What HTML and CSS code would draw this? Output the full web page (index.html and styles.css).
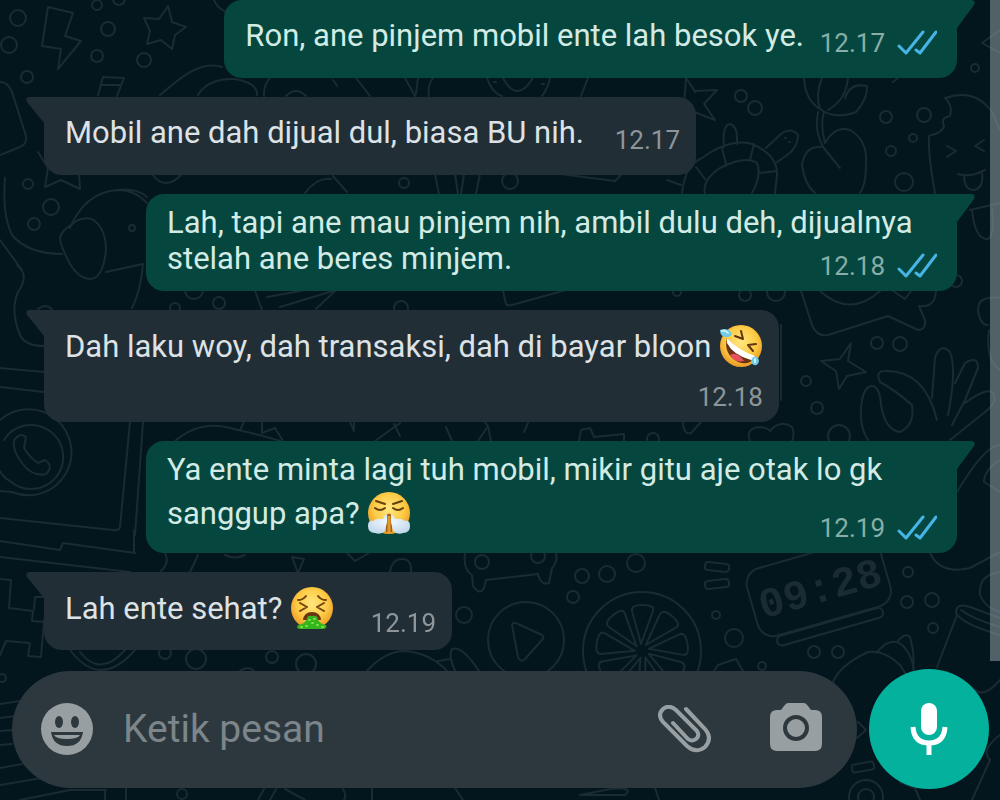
FILE: index.html
```html
<!DOCTYPE html>
<html lang="id">
<head>
    <meta charset="UTF-8">
    <meta name="viewport" content="width=device-width, initial-scale=1.0">
    <title>Chat</title>
    <link rel="stylesheet" href="styles.css">
</head>
<body>
    <!-- wallpaper -->
    <svg class="wallpaper" viewBox="0 0 1000 800" preserveAspectRatio="xMidYMid slice" aria-hidden="true">
        <!-- bubbles -->
        <g>
            <circle cx="18" cy="18" r="8"/><circle cx="9" cy="45" r="8"/><circle cx="97" cy="5" r="5"/>
            <circle cx="108" cy="29" r="7"/><circle cx="97" cy="56" r="6"/><circle cx="144" cy="60" r="7"/>
            <circle cx="27" cy="77" r="6"/><circle cx="119" cy="-1" r="6"/><circle cx="28" cy="184" r="5"/>
            <circle cx="51" cy="207" r="8"/><circle cx="34" cy="224" r="6"/><circle cx="132" cy="228" r="3"/>
            <circle cx="194" cy="290" r="9"/><circle cx="219" cy="303" r="6"/><circle cx="175" cy="308" r="5"/>
            <circle cx="165" cy="653" r="6"/><circle cx="196" cy="659" r="10"/><circle cx="272" cy="657" r="6"/>
            <circle cx="306" cy="664" r="10"/><circle cx="2" cy="678" r="4"/><circle cx="182" cy="794" r="5"/>
            <circle cx="482" cy="562" r="7"/><circle cx="538" cy="556" r="7"/><circle cx="464" cy="615" r="8"/>
            <circle cx="582" cy="576" r="7"/><circle cx="607" cy="574" r="8"/><circle cx="636" cy="563" r="9"/>
            <circle cx="573" cy="597" r="6"/><circle cx="716" cy="615" r="4"/><circle cx="734" cy="638" r="9"/>
            <circle cx="814" cy="652" r="6"/><circle cx="838" cy="652" r="6"/><circle cx="762" cy="666" r="4"/>
            <circle cx="908" cy="572" r="5"/><circle cx="907" cy="602" r="6"/><circle cx="932" cy="600" r="7"/>
            <circle cx="933" cy="628" r="5"/><circle cx="741" cy="96" r="6"/><circle cx="755" cy="108" r="7"/>
            <circle cx="886" cy="117" r="6"/><circle cx="924" cy="115" r="7"/><circle cx="913" cy="138" r="4"/>
            <circle cx="891" cy="151" r="5"/><circle cx="904" cy="182" r="9"/><circle cx="975" cy="68" r="4"/>
            <circle cx="404" cy="183" r="5"/><circle cx="510" cy="181" r="8"/><circle cx="745" cy="295" r="6"/>
            <circle cx="776" cy="292" r="9"/><circle cx="877" cy="343" r="6"/><circle cx="900" cy="344" r="7"/>
            <circle cx="806" cy="381" r="5"/><circle cx="817" cy="408" r="6"/><circle cx="839" cy="436" r="11"/>
            <circle cx="956" cy="281" r="6"/><circle cx="866" cy="797" r="8"/><circle cx="866" cy="797" r="17"/>
            <circle cx="401" cy="308" r="7"/><circle cx="653" cy="439" r="6"/><circle cx="677" cy="292" r="4"/>
        </g>
        <!-- bolt, stars, pages -->
        <path d="M48 7 73 13 65 36 81 41 58 69 61 49 42 46Z"/>
        <path d="M168 6 172 22 186 27 175 35 172 49 161 40 147 44 150 31 144 18 159 19Z"/>
        <path d="M98 95 103 77 124 78 117 96M101 85h20M160 95C180 78 200 60 222 67M198 95Q208 78 235 79Q258 83 257 95M264 96Q263 84 272 76M286 96q10-10 20 0M214 0q3 8 12 12"/>
        <path d="M0 82Q8 82 12 92L26 136Q27 144 20 147L0 155M38 152 48 168 45 187 61 180 80 189 79 173"/>
        <!-- elephant -->
        <path d="M5 178Q2 215 12 235Q28 254 62 254M0 240 22 270M70 228Q85 192 118 190Q135 190 147 203M110 191Q135 186 147 197"/>
        <path d="M70 226Q80 216 92 219Q106 228 106 250Q103 279 90 279Q78 278 70 264Q60 245 60 238Q62 230 70 226M106 272 143 264Q141 290 132 308M152 174Q165 192 182 174"/>
        <path d="M17 265Q30 275 18 292Q10 310 20 335Q25 346 44 346M255 291 262 310M267 297 333 285M280 307 336 290 316 309M38 309q7-6 14 0"/>
        <!-- laptop with chat sticker -->
        <path d="M0 368 44 372M0 387 44 392M130 422 120 527Q119 531 113 530L0 518M143 422 135 535"/>
        <path d="M0 420A43 43 0 1 1 12 492L0 491M0 471Q4 478 10 481A32 32 0 1 0 4 440"/>
        <path d="M14 440Q20 432 26 437L24 448Q30 458 38 463L45 460Q54 466 46 474Q32 477 22 463Q12 450 14 440Z"/>
        <path d="M175 441Q200 420 230 428Q265 436 280 441M240 430l4-8M262 422V433L275 428 283 441"/>
        <path d="M350 422l4 9V422M375 441l25-18M394 424l6 12M446 427l6 14M478 441l10-15 3 15M488 426l-4-5M524 432l4-9M579 441l2-11 9-2 4 9 30-3v7M502 287l4 17q1 2 6 1L566 290"/>
        <!-- castle -->
        <path d="M0 541 60 550 63 543 135 553M0 557 130 572M134 530v22M165 553q5 10-4 18M198 555l-8 17M292 557l12 2-6 14zM225 555q10 5 20 0"/>
        <path d="M0 579 11 580 9 608 33 611 32 621 44 622M0 655 6 641 30 643 28 656 41 657 44 620M44 597H35L34 609"/>
        <path d="M70 650Q100 690 135 650M80 652Q100 678 125 650M240 671q8-6 14 0"/>
        <path d="M0 704 20 701M0 718 16 716M0 731 13 730M0 745 12 744M0 768 22 764M0 785 60 775M20 800 70 790 106 790M105 800V790M126 789V800M258 800 264 789M270 800 276 789M285 789 305 800"/>
        <!-- bone, play, car -->
        <path d="M347 553l8 8 14-8M390 572Q392 559 402 559Q412 559 411 572"/>
        <path d="M465 553Q463 570 472 575L473 586Q480 596 484 588L486 580 538 574Q541 586 549 583L552 568Q558 562 556 553"/>
        <circle cx="526" cy="640" r="38"/>
        <path d="M512 625Q513 621 518 624L542 635Q545 637 542 640L525 659Q520 663 518 657Z"/>
        <path d="M367 671Q385 651 405 651Q430 653 447 671M438 661l13-2M479 671Q462 645 452 649Q448 655 455 671"/>
        <!-- citrus -->
        <circle cx="642" cy="651" r="59"/>
        <g id="slices">
            <path id="slice" d="M641 644 632 611Q631 605 642 605Q655 605 653 611Z"/>
            <use href="#slice" transform="rotate(40 642 651)"/><use href="#slice" transform="rotate(80 642 651)"/>
            <use href="#slice" transform="rotate(120 642 651)"/><use href="#slice" transform="rotate(160 642 651)"/>
            <use href="#slice" transform="rotate(200 642 651)"/><use href="#slice" transform="rotate(240 642 651)"/>
            <use href="#slice" transform="rotate(280 642 651)"/><use href="#slice" transform="rotate(320 642 651)"/>
        </g>
        <!-- alarm clock -->
        <g transform="rotate(-16 820 588)">
            <rect x="750" y="552" width="138" height="70" rx="16"/>
            <rect x="764" y="623" width="110" height="10" rx="5"/>
            <text class="clock" x="820" y="602" text-anchor="middle">09:28</text>
        </g>
        <rect x="705" y="563" width="24" height="8" rx="3" transform="rotate(6 717 567)"/>
        <rect x="705" y="580" width="24" height="8" rx="3" transform="rotate(-6 717 584)"/>
        <!-- muffin, cup -->
        <path d="M833 682Q840 665 868 652Q885 650 900 665L911 682M878 651Q893 634 905 648Q914 660 914 674M898 641Q905 632 910 637Q915 655 913 668M714 671l4-6 18-6 7 12"/>
        <path d="M1000 635Q962 624 956 613Q956 602 970 607L1000 618M1000 627Q975 620 961 610M957 615 937 667M930 553Q940 575 970 568L1000 552M1000 572Q978 575 980 595Q985 608 1000 612M975 690q10 8 25-10"/>
        <path d="M858 722l8 8-9 8M1000 735Q980 750 990 760L972 800M900 782l15 6 5 12M655 788l4 12M580 795h45q10-8-15-6zM455 788l8 12M343 789q4 6 1 11M372 789v11"/>
        <rect x="852" y="763" width="22" height="8" rx="2" transform="rotate(-10 863 767)"/>
        <!-- turtle -->
        <path d="M682 193Q685 165 702 158Q730 138 752 144Q778 155 777 175L775 193M705 193Q702 180 720 168Q745 155 757 163Q762 175 752 193M696 167l9 12M722 148l4 16M754 144l-4 16M760 173l17-2"/>
        <path d="M724 147Q722 125 730 124Q738 126 737 144M766 148 782 133Q792 127 798 135Q798 148 786 156L777 162M785 138h1M789 142h1M667 180l14 5"/>
        <path d="M684 105 686 78 695 91 717 90 704 104 715 120 694 112M690 84l5 8"/>
        <!-- flower -->
        <path d="M804 78Q805 100 820 109Q835 120 856 112Q868 98 867 86Q850 82 845 98M822 78Q815 95 820 109M848 78Q846 100 828 110M818 112Q814 130 823 147L840 168M824 112Q820 125 825 143"/>
        <path d="M823 147Q805 145 802 165Q805 185 815 193M825 143Q835 125 850 130Q868 140 866 165Q866 185 860 193"/>
        <!-- ice cream -->
        <path d="M945 98Q953 105 950 116Q940 118 944 125Q944 132 929 136Q928 155 935 193M945 98Q975 88 992 112L1000 130M947 146l9 5-9 6M984 140l-9 6 9 5M958 174Q970 178 985 170M964 175Q964 190 974 190Q984 188 982 173M970 210 1000 203M972 210Q975 240 988 239Q995 235 992 208M1000 30 982 43 1000 53"/>
        <!-- between the messages -->
        <path d="M356 78l14 18M333 80l4 6M405 78l10 18M418 78l-2 16M433 78q-6 8-4 18M487 78Q492 93 502 96M503 78Q517 104 533 78M550 78q-2 10-8 18M588 78l-7 18M494 82h2M542 84h2"/>
        <path d="M333 176l14 16M305 193q12-16 26-14M435 174l4 20M455 174l3 20M464 174l-3 20M480 174l-4 20M560 174 615 181 622 174M893 82l6-5"/>
        <!-- phone, sparkle, hand, heart -->
        <path d="M801 291 812 325Q817 337 828 335L888 316 918 330Q926 330 925 320L919 306Q935 308 936 291M820 291Q850 318 880 291M893 291l12 8 6-8M781 325v75"/>
        <path d="M851 343 848 361 866 372 847 376 839 389 836 371 821 361 840 359Z"/>
        <path d="M868 440Q858 425 862 400Q865 385 873 386Q880 388 881 405Q885 430 900 432Q915 425 912 405Q895 390 880 382Q875 371 885 371Q925 370 937 420M932 398 935 358Q940 342 950 352Q957 370 948 415M955 383 965 363Q978 355 978 368L965 400 952 425M965 403Q985 388 992 392Q1000 400 985 412L950 440"/>
        <path d="M750 441Q745 428 760 427Q768 428 770 431Q780 419 792 427Q795 435 792 441M683 421q0 14 8 12l11-12M1000 298Q978 295 978 310Q980 325 988 325M1000 370Q985 360 989 330M1000 445Q985 445 957 492M1000 460q-16 10-16 22l16 10"/>
    </svg>

    <!-- shared symbols -->
    <svg class="defs" aria-hidden="true">
        <defs>
            <radialGradient id="face" cx="50%" cy="40%" r="60%">
                <stop offset="0" stop-color="#ffe780"/>
                <stop offset="0.6" stop-color="#fdcb45"/>
                <stop offset="1" stop-color="#eb9a24"/>
            </radialGradient>
            <radialGradient id="cloud" cx="50%" cy="40%" r="60%">
                <stop offset="0" stop-color="#f5fbff"/>
                <stop offset="1" stop-color="#c3d9ec"/>
            </radialGradient>
            <symbol id="ticks" viewBox="0 0 40 26">
                <path d="M2 16 9 23 26 2M19 20 23 23 39 2" fill="none" stroke="#47b4e6" stroke-width="3" stroke-linecap="round" stroke-linejoin="round"/>
            </symbol>
        </defs>
    </svg>

    <main class="chat">
        <div class="bubble sent short">
            <p class="text">Ron, ane pinjem mobil ente lah besok ye.</p>
            <div class="meta"><time>12.17</time><svg class="ticks" role="img" aria-label="Dibaca"><use href="#ticks"/></svg></div>
        </div>

        <div class="bubble received short">
            <p class="text">Mobil ane dah dijual dul, biasa BU nih.</p>
            <div class="meta"><time>12.17</time></div>
        </div>

        <div class="bubble sent">
            <p class="text">Lah, tapi ane mau pinjem nih, ambil dulu deh, dijualnya stelah ane beres minjem.</p>
            <div class="meta"><time>12.18</time><svg class="ticks" role="img" aria-label="Dibaca"><use href="#ticks"/></svg></div>
        </div>

        <div class="bubble received stacked">
            <p class="text">Dah laku woy, dah transaksi, dah di bayar bloon
                <svg class="emoji" viewBox="0 0 44 42" role="img" aria-label="🤣">
                    <circle cx="22" cy="21" r="21" fill="url(#face)"/>
                    <path d="M8 13Q20 27 35 33Q30 41 19 37Q4 29 8 13Z" fill="#6b3312"/>
                    <path d="M11 30Q18 26 25 36Q15 38 11 30Z" fill="#e8505b"/>
                    <path d="M8 13Q19 25 36 31Q35 35 32 35Q14 30 8 18Z" fill="#fff"/>
                    <path d="M16 11 24 14 22 6M37 19 29 20 34 26" fill="none" stroke="#65330d" stroke-width="2" stroke-linecap="round" stroke-linejoin="round"/>
                    <path d="M1 5Q8 2 12 7Q14 11 9 12Q1 13 1 5ZM34 32Q39 30 40 36Q39 41 35 40Q30 38 34 32Z" fill="#6fcbe6"/>
                    <path d="M3 6q4-1 6 2M36 34v3" fill="none" stroke="#c9f1fb" stroke-width="2" stroke-linecap="round"/>
                </svg>
            </p>
            <div class="meta"><time>12.18</time></div>
        </div>

        <div class="bubble sent">
            <p class="text has-emoji">Ya ente minta lagi tuh mobil, mikir gitu aje otak lo gk sanggup apa?
                <svg class="emoji" viewBox="0 0 44 42" role="img" aria-label="😤">
                    <circle cx="22" cy="21" r="21" fill="url(#face)"/>
                    <path d="M9 9 18 12M35 9 26 12M8 16Q13 20 18 16M26 16Q31 20 36 16" fill="none" stroke="#65400f" stroke-width="2" stroke-linecap="round"/>
                    <path d="M18 25Q22 18 26 25L25 40H19Z" fill="#a85f16"/>
                    <path d="M20 22Q17 23 16 27Q9 26 6 29Q1 28 1 34Q1 41 8 41Q14 43 18 39L20 30ZM24 22Q27 23 28 27Q35 26 38 29Q43 28 43 34Q43 41 36 41Q30 43 26 39L24 30Z" fill="url(#cloud)"/>
                    <path d="M22 24V40" stroke="#e09a2c" stroke-width="3"/>
                </svg>
            </p>
            <div class="meta"><time>12.19</time><svg class="ticks" role="img" aria-label="Dibaca"><use href="#ticks"/></svg></div>
        </div>

        <div class="bubble received reply">
            <p class="text has-emoji">Lah ente sehat?
                <svg class="emoji" viewBox="0 0 44 42" role="img" aria-label="🤮">
                    <circle cx="22" cy="21" r="21" fill="url(#face)"/>
                    <path d="M8 13Q13 13 16 9M36 13Q31 13 28 9M10 16 17 20 10 24M34 16 27 20 34 24" fill="none" stroke="#74420f" stroke-width="2" stroke-linecap="round" stroke-linejoin="round"/>
                    <path d="M13 33Q14 25 22 25Q30 25 31 33Z" fill="#6b3511"/>
                    <path d="M17 32Q17 28 22 29Q28 28 28 33Q30 37 36 38Q38 42 32 42H11Q5 42 8 38Q15 37 17 32Z" fill="#35b51d"/>
                    <path d="M19 33h1M24 32h1M22 36h1M16 39h1M27 38h1M32 40h1M11 40h1" stroke="#7be04b" stroke-width="2" stroke-linecap="round"/>
                </svg>
            </p>
            <div class="meta"><time>12.19</time></div>
        </div>

        <div class="scrollbar"></div>
    </main>

    <form class="composer">
        <div class="field">
            <button type="button" class="icon-btn" aria-label="Emoji">
                <svg width="52" height="52" viewBox="0 0 52 52">
                    <circle cx="26" cy="26" r="26" fill="#989fa2"/>
                    <ellipse cx="18" cy="19" rx="4" ry="6" fill="#2d383e"/>
                    <ellipse cx="34" cy="19" rx="4" ry="6" fill="#2d383e"/>
                    <path d="M10 29H42Q40 43 26 43Q12 43 10 29Z" fill="#2d383e"/>
                    <path d="M13 32H39Q37 36 26 36Q15 36 13 32Z" fill="#989fa2"/>
                </svg>
            </button>
            <input type="text" class="message" placeholder="Ketik pesan" aria-label="Ketik pesan">
            <button type="button" class="icon-btn attach" aria-label="Lampirkan">
                <svg width="54" height="48" viewBox="0 0 54 48" fill="none" stroke="#989fa2" stroke-width="4" stroke-linecap="round">
                    <path d="M28 4 47 24Q55 33 47 42Q38 49 29 41L5 17Q-1 10 5 4Q11 -1 18 5L39 26Q42 31 38 34Q34 37 30 34L15 18"/>
                </svg>
            </button>
            <button type="button" class="icon-btn camera" aria-label="Kamera">
                <svg width="52" height="48" viewBox="0 0 52 48">
                    <path d="M18 0H34Q36 0 38 3L41 7H45Q52 7 52 14V41Q52 48 45 48H7Q0 48 0 41V14Q0 7 7 7H11L14 3Q16 0 18 0Z" fill="#989fa2"/>
                    <circle cx="26" cy="25" r="11" fill="none" stroke="#2d383e" stroke-width="4"/>
                </svg>
            </button>
        </div>
        <button type="button" class="mic" aria-label="Pesan suara">
            <svg width="38" height="52" viewBox="0 0 38 52">
                <rect x="11" y="0" width="16" height="32" rx="8" fill="#fff"/>
                <path d="M3 24Q4 40 19 40Q34 40 35 24M19 40V52" fill="none" stroke="#fff" stroke-width="5"/>
            </svg>
        </button>
    </form>
</body>
</html>
```

FILE: styles.css
```css
* {
    box-sizing: border-box;
}
body {
    margin: 0;
    min-height: 100vh;
    display: flex;
    flex-direction: column;
    background-color: #03161e;
    font-family: Roboto, "Liberation Sans", sans-serif;
    overflow-x: hidden;
}
.wallpaper {
    position: fixed;
    inset: 0;
    width: 100%;
    height: 100%;
    z-index: -1;
    fill: none;
    stroke: #1a2b32;
    stroke-width: 2;
    stroke-linecap: round;
    stroke-linejoin: round;
}
.clock {
    fill: #1a2b32;
    stroke: none;
    font-family: "Liberation Mono", monospace;
    font-size: 42px;
    font-weight: bold;
}
.defs {
    position: absolute;
    width: 0;
    height: 0;
}

/* messages */
.chat {
    position: relative;
    flex: 1;
    display: flex;
    flex-direction: column;
    justify-content: flex-end;
    gap: 19px;
    padding: 0 43px 19px 44px;
}
.bubble {
    position: relative;
    display: grid;
    max-width: calc(100% - 102px);
    padding: 11px 20px 10px 21px;
    border-radius: 18px;
}
.bubble::before {
    content: "";
    position: absolute;
    top: 0;
    width: 18px;
    height: 29px;
}
.sent {
    align-self: flex-end;
    background-color: #05473f;
    color: #d3ebe5;
    border-top-right-radius: 0;
}
.sent::before {
    left: 100%;
    background-color: #05473f;
    clip-path: path("M0 0H15Q19 1 17 5L0 28Z");
}
.received {
    align-self: flex-start;
    background-color: #222e35;
    color: #dde2e6;
    border-top-left-radius: 0;
    padding-right: 16px;
}
.received::before {
    right: 100%;
    background-color: #222e35;
    clip-path: path("M18 0H3Q-1 1 1 5L18 26Z");
}
.text {
    grid-area: 1 / 1;
    margin: 0 0 4px;
    font-size: 31px;
    line-height: 36px;
}
.has-emoji {
    margin-bottom: 9px;
}
.meta {
    grid-area: 1 / 1;
    align-self: end;
    justify-self: end;
    display: flex;
    align-items: center;
    gap: 12px;
    font-size: 26px;
    line-height: 30px;
    color: #8e969a;
}
.sent .meta {
    color: #88aea7;
}
.ticks {
    width: 40px;
    height: 26px;
}
.emoji {
    width: 44px;
    height: 42px;
    margin-top: 4px;
    vertical-align: -10px;
}

/* one-line messages keep room for the time beside the text */
.short {
    padding-top: 18px;
    padding-bottom: 20px;
}
.received.short .text {
    padding-right: 96px;
}
.sent.short .text {
    padding-right: 133px;
}
.reply {
    padding-bottom: 12px;
}
.reply .text {
    padding-right: 102px;
}
.stacked .text {
    margin-bottom: 15px;
}
.stacked .meta {
    grid-area: 2 / 1;
}
.scrollbar {
    position: absolute;
    top: 0;
    right: 0;
    bottom: 8px;
    width: 10px;
    background-color: rgba(140, 152, 158, 0.58);
}

/* composer */
.composer {
    display: flex;
    align-items: center;
    gap: 12px;
    padding: 0 11px 11px 12px;
}
.field {
    flex: 1;
    min-width: 0;
    height: 117px;
    display: flex;
    align-items: center;
    padding: 0 35px 0 29px;
    border-radius: 59px;
    background-color: #2d383e;
}
.message {
    flex: 1;
    min-width: 0;
    margin: 0 30px;
    padding: 0;
    border: none;
    outline: none;
    background: none;
    color: #dde2e6;
    font-family: inherit;
    font-size: 39px;
}
.message::placeholder {
    color: #7c8589;
    opacity: 1;
}
.icon-btn,
.mic {
    display: flex;
    align-items: center;
    justify-content: center;
    padding: 0;
    border: none;
    background: none;
    cursor: pointer;
}
.attach {
    margin-right: 58px;
}
.camera {
    padding-bottom: 4px;
}
.mic {
    width: 120px;
    height: 120px;
    flex-shrink: 0;
    border-radius: 50%;
    background-color: #04b19d;
}
```
